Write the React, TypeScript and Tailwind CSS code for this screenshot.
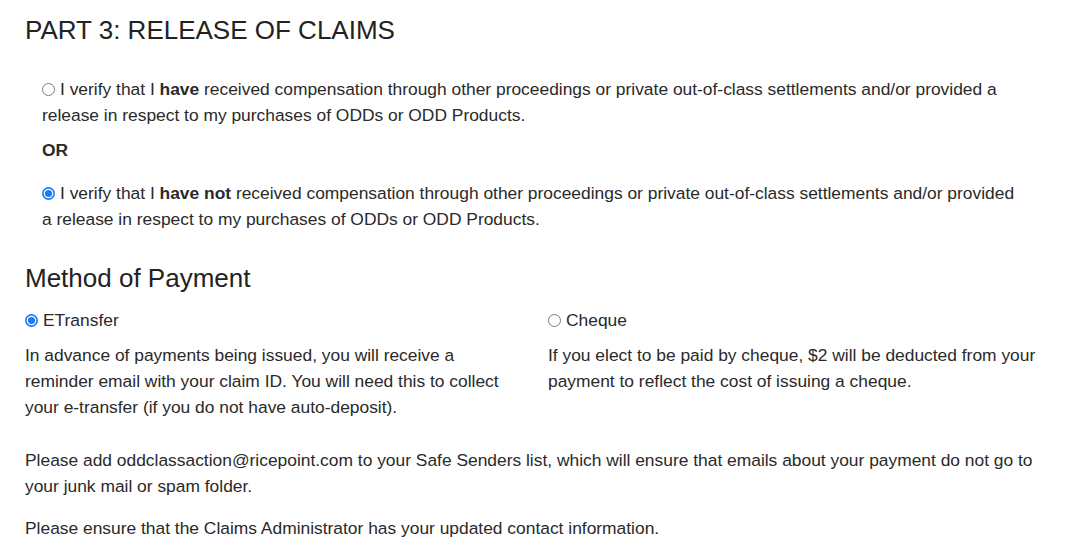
import { useState } from "react";

function Radio({ checked }: { checked: boolean }) {
  return (
    <svg
      width="13"
      height="13"
      viewBox="0 0 13 13"
      className="inline-block align-[-1px] mr-[5px]"
    >
      {checked ? (
        <>
          <circle cx="6.5" cy="6.5" r="6.5" fill="#1a7cf5" />
          <circle cx="6.5" cy="6.5" r="4.8" fill="#ffffff" />
          <circle cx="6.5" cy="6.5" r="3.6" fill="#1a7cf5" />
        </>
      ) : (
        <circle cx="6.5" cy="6.5" r="6" fill="#ffffff" stroke="#7a7a7a" strokeWidth="1" />
      )}
    </svg>
  );
}

export default function App() {
  const [release, setRelease] = useState<string>("not");
  const [method, setMethod] = useState<string>("etransfer");

  return (
    <div className="bg-white w-[1080px] h-[553px] overflow-hidden font-['Liberation_Sans',Arial,sans-serif] text-[#2a2a2a]">
      <div className="pl-[25px] pt-[14px] w-[1055px]">
        {/* Part 3 */}
        <h2 className="text-[26px] leading-[32px] text-[#222222]">
          PART 3: RELEASE OF CLAIMS
        </h2>

        <div className="ml-[17px] mt-[30px] w-[985px] text-[17.4px] leading-[26px]">
          <p className="cursor-pointer" onClick={() => setRelease("have")}>
            <Radio checked={release === "have"} />
            I verify that I <b>have</b> received compensation through other
            proceedings or private out-of-class settlements and/or provided a
            release in respect to my purchases of ODDs or ODD Products.
          </p>
          <p className="font-bold mt-[9px]">OR</p>
          <p className="cursor-pointer mt-[17px]" onClick={() => setRelease("not")}>
            <Radio checked={release === "not"} />
            I verify that I <b>have not</b> received compensation through other
            proceedings or private out-of-class settlements and/or provided a
            release in respect to my purchases of ODDs or ODD Products.
          </p>
        </div>

        {/* Method of payment */}
        <h3 className="text-[26px] leading-[32px] text-[#222222] mt-[30px]">
          Method of Payment
        </h3>

        <div className="grid grid-cols-[505px_1fr] gap-x-[18px] mt-[13px] text-[17.4px] leading-[26px]">
          <div>
            <p className="cursor-pointer" onClick={() => setMethod("etransfer")}>
              <Radio checked={method === "etransfer"} />
              ETransfer
            </p>
            <p className="mt-[9px] w-[485px]">
              In advance of payments being issued, you will receive a reminder
              email with your claim ID. You will need this to collect your
              e-transfer (if you do not have auto-deposit).
            </p>
          </div>
          <div>
            <p className="cursor-pointer" onClick={() => setMethod("cheque")}>
              <Radio checked={method === "cheque"} />
              Cheque
            </p>
            <p className="mt-[9px]">
              If you elect to be paid by cheque, $2 will be deducted from your
              payment to reflect the cost of issuing a cheque.
            </p>
          </div>
        </div>

        <p className="mt-[27px] text-[17.4px] leading-[26px]">
          Please add oddclassaction@ricepoint.com to your Safe Senders list,
          which will ensure that emails about your payment do not go to your
          junk mail or spam folder.
        </p>
        <p className="mt-[16px] text-[17.4px] leading-[26px]">
          Please ensure that the Claims Administrator has your updated contact
          information.
        </p>
      </div>
    </div>
  );
}
